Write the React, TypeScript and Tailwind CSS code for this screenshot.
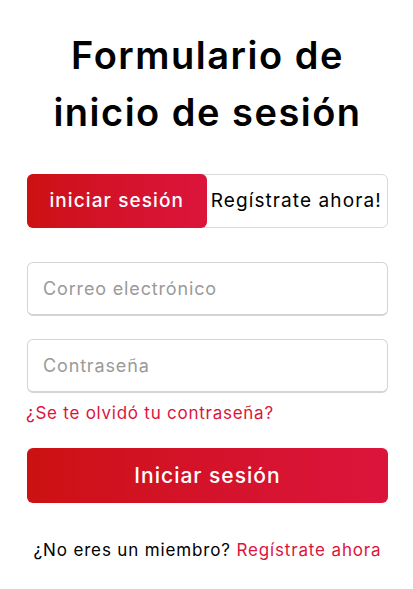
import React from "react";

export default function App() {
  return (
    <div
      className="min-h-screen bg-white pl-[27px] pr-[25px] pt-[27px]"
      style={{ fontFamily: "Inter, 'Noto Sans', sans-serif" }}
    >
      <h1 className="text-center text-[38px] leading-[57px] font-semibold tracking-[1.5px] text-black">
        Formulario de
        <br />
        inicio de sesión
      </h1>

      <div className="mt-[33px] flex h-[54px] w-full rounded-[6px] border border-[#d9d9d9]">
        <button className="-m-px flex h-[54px] w-1/2 items-center justify-center rounded-[6px] bg-gradient-to-r from-[#cc1111] to-[#dc143c] text-[19px] font-medium tracking-[1.1px] text-white">
          iniciar sesión
        </button>
        <button className="flex flex-1 items-center justify-center text-[19px] tracking-[1.1px] text-black whitespace-nowrap">
          Regístrate ahora!
        </button>
      </div>

      <div className="mt-[34px] flex flex-col">
        <input
          className="h-[54px] w-full rounded-[6px] border border-b-2 border-[#d4d4d4] px-[15px] text-[18px] tracking-[0.85px] placeholder:text-[#9a9a9a] outline-none"
          placeholder="Correo electrónico"
        />
        <input
          className="mt-[23px] h-[54px] w-full rounded-[6px] border border-b-2 border-[#d4d4d4] px-[15px] text-[18px] tracking-[0.85px] placeholder:text-[#9a9a9a] outline-none"
          placeholder="Contraseña"
          type="password"
        />
        <a className="mt-[8px] -ml-px text-[17px] leading-[24px] tracking-[0.75px] text-[#dc143c]">
          ¿Se te olvidó tu contraseña?
        </a>
      </div>

      <button className="mt-[23px] flex h-[55px] w-full items-center justify-center rounded-[6px] bg-gradient-to-r from-[#cc1111] to-[#dc143c] text-[21px] font-medium tracking-[1px] text-white">
        Iniciar sesión
      </button>

      <p className="mt-[35px] text-center text-[17px] tracking-[0.85px] text-black">
        ¿No eres un miembro? <a className="text-[#dc143c]">Regístrate ahora</a>
      </p>
    </div>
  );
}
